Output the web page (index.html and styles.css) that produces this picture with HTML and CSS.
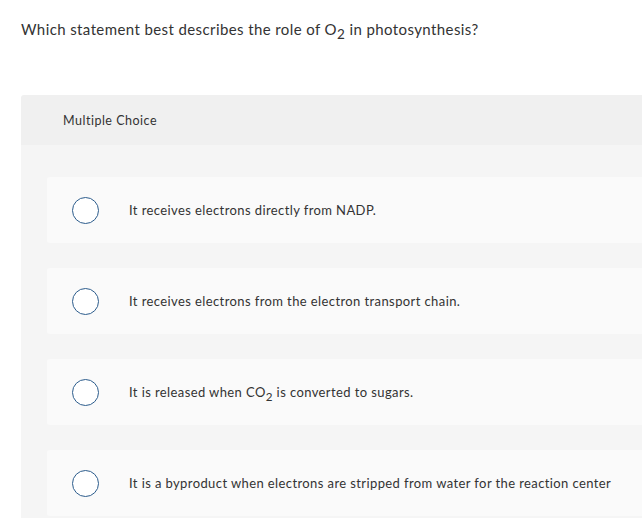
FILE: index.html
```html
<!DOCTYPE html>
<html>
<head>
<meta charset="utf-8">
<link rel="stylesheet" href="styles.css">
</head>
<body>
<div class="question">Which statement best describes the role of O<sub>2</sub> in photosynthesis?</div>
<div class="panel">
  <div class="panel-head">Multiple Choice</div>
  <div class="options">
    <div class="option"><span class="radio"></span><span class="label">It receives electrons directly from NADP.</span></div>
    <div class="option"><span class="radio"></span><span class="label">It receives electrons from the electron transport chain.</span></div>
    <div class="option"><span class="radio"></span><span class="label">It is released when CO<sub>2</sub> is converted to sugars.</span></div>
    <div class="option"><span class="radio"></span><span class="label">It is a byproduct when electrons are stripped from water for the reaction center</span></div>
  </div>
</div>
</body>
</html>
```
FILE: styles.css
```css
html, body {
  margin: 0;
  padding: 0;
  background: #ffffff;
  font-family: Lato, "Open Sans", "Liberation Sans", sans-serif;
  color: #333333;
}
body {
  padding: 19px 0 0 21px;
  overflow: hidden;
}
.question {
  font-size: 15px;
  line-height: 20px;
  height: 20px;
  letter-spacing: 0.4px;
}
sub {
  font-size: 0.9em;
  vertical-align: -0.3em;
  line-height: 0;
}
.panel {
  margin-top: 56px;
}
.panel-head {
  background: #f0f0f0;
  height: 50px;
  display: flex;
  align-items: center;
  padding-left: 42px;
  font-size: 12.5px;
  letter-spacing: 0.5px;
  border-top-left-radius: 3px;
}
.options {
  background: #f5f5f5;
  padding: 32px 0 4px 26px;
  display: flex;
  flex-direction: column;
  gap: 25px;
}
.option {
  background: #fafafa;
  height: 66px;
  display: flex;
  align-items: center;
  border-radius: 3px 0 0 3px;
  padding-left: 25px;
}
.radio {
  width: 25px;
  height: 25px;
  border: 1.5px solid #2c5c8c;
  border-radius: 50%;
  background: #ffffff;
  flex: none;
}
.label {
  margin-left: 30px;
  font-size: 13px;
  letter-spacing: 0.4px;
}
```
